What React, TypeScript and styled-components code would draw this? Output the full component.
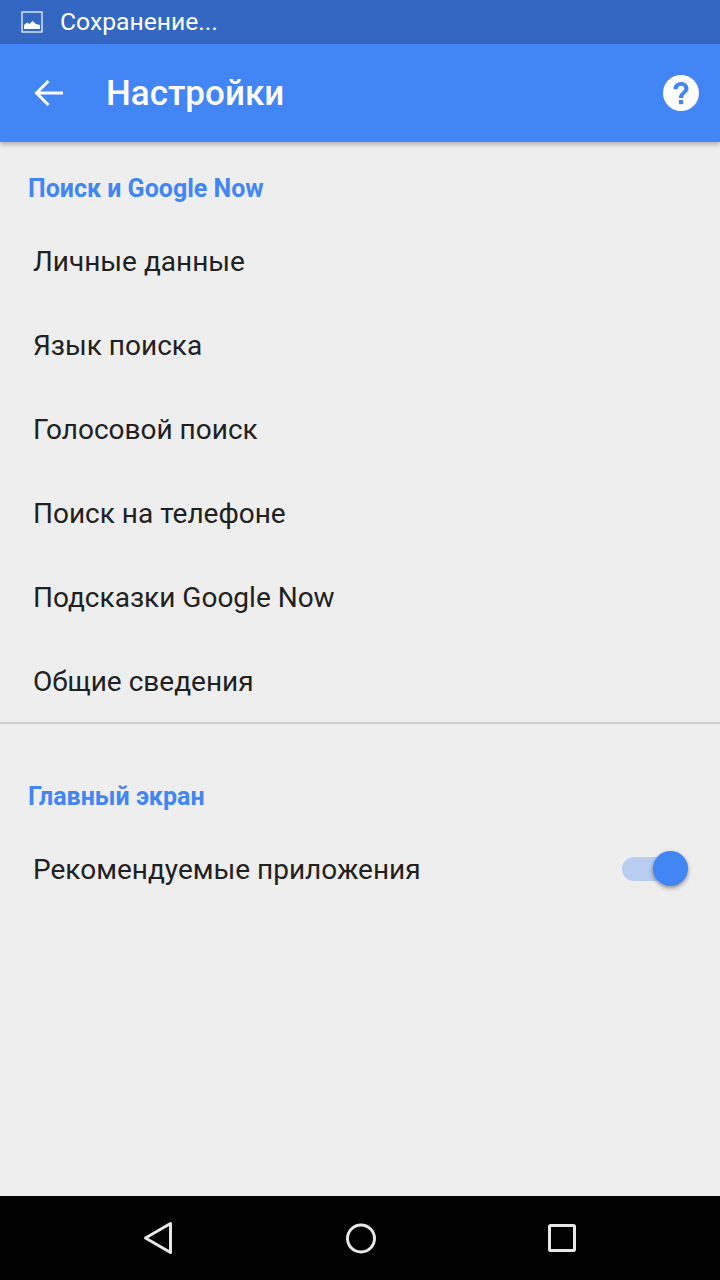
import React from "react";
import styled, { createGlobalStyle } from "styled-components";

const Global = createGlobalStyle`
  html, body { margin: 0; padding: 0; }
  body { font-family: Roboto, "Noto Sans", sans-serif; background: #eeeeee; }
`;

const Screen = styled.div`
  width: 720px;
  height: 1280px;
  display: flex;
  flex-direction: column;
  background: #eeeeee;
  overflow: hidden;
`;

const StatusBar = styled.div`
  height: 44px;
  flex: none;
  background: #3367c2;
  display: flex;
  align-items: center;
  padding-left: 21px;
  gap: 17px;
  color: #fff;
  font-size: 24.7px;
`;

const StatusText = styled.span`
  margin-bottom: 2px;
`;

const AppBar = styled.header`
  height: 98px;
  flex: none;
  background: #4285f4;
  display: flex;
  align-items: center;
  color: #fff;
  padding: 0 21px 0 34px;
  box-shadow: 0 2px 5px rgba(0, 0, 0, 0.3);
  position: relative;
`;

const Title = styled.h1`
  margin: 0 0 0 42px;
  font-size: 35px;
  font-weight: 500;
  flex: 1;
`;

const Content = styled.main`
  flex: 1;
  display: flex;
  flex-direction: column;
`;

const SectionHeader = styled.div<{ $height: number }>`
  height: ${(p) => p.$height}px;
  display: flex;
  align-items: flex-end;
  padding: 0 0 16px 28px;
  box-sizing: border-box;
  color: #4285f4;
  font-size: 25px;
  font-weight: 700;
  line-height: 28px;
`;

const Row = styled.div`
  height: 84px;
  display: flex;
  align-items: center;
  justify-content: space-between;
  padding: 0 32px 0 33px;
  color: #212121;
  font-size: 28px;
`;

const Divider = styled.hr`
  margin: -1px 0 0;
  border: 0;
  height: 2px;
  background: #d0d0d0;
`;

const Switch = styled.div`
  width: 66px;
  height: 36px;
  position: relative;
  display: flex;
  align-items: center;
`;

const Track = styled.div`
  width: 60px;
  height: 24px;
  border-radius: 12px;
  background: #b8cdef;
`;

const Thumb = styled.div`
  position: absolute;
  right: 0;
  top: 0;
  width: 35px;
  height: 35px;
  border-radius: 50%;
  background: #4285f4;
  box-shadow: 0 2px 4px rgba(0, 0, 0, 0.4);
`;

const NavBar = styled.nav`
  height: 84px;
  flex: none;
  background: #000;
  display: flex;
  align-items: center;
  justify-content: center;
  gap: 158px;
  padding-left: 2px;
`;

const NavIcon = styled.svg`
  width: 44px;
  height: 44px;
  display: block;
`;

const items = ["Личные данные", "Язык поиска", "Голосовой поиск", "Поиск на телефоне", "Подсказки Google Now", "Общие сведения"];

export default function App() {
  return (
    <Screen>
      <Global />
      <StatusBar>
        <svg width="22" height="22" viewBox="0 0 22 22">
          <rect x="1" y="1" width="20" height="20" fill="none" stroke="#fff" strokeWidth="1.4" opacity="0.85" />
          <path d="M3 18v-4l3-2.500 2.500 1.500 3-3 3.500 3 4 1V18z" fill="#fff" />
        </svg>
        <StatusText>Сохранение...</StatusText>
      </StatusBar>
      <AppBar>
        <svg width="30" height="30" viewBox="0 0 30 30" fill="none" stroke="#fff" strokeWidth="3">
          <path d="M29 15H3M14.500 3 2.500 15l12 12" />
        </svg>
        <Title>Настройки</Title>
        <svg width="36" height="36" viewBox="0 0 36 36">
          <circle cx="18" cy="18" r="18" fill="#fff" />
          <path d="M10.500 14c0-4 3.300-7 7.500-7s7.500 2.700 7.500 6.500c0 4.700-5.300 5-5.300 9.500h-4.200c0-6 5.300-6 5.300-9.500 0-1.500-1.500-2.800-3.300-2.800s-3.400 1.500-3.400 3.800z" fill="#4285f4" />
          <rect x="16" y="25" width="4.200" height="4.200" fill="#4285f4" />
        </svg>
      </AppBar>
      <Content>
        <SectionHeader $height={77}>Поиск и Google Now</SectionHeader>
        {items.map((t) => (
          <Row key={t}>{t}</Row>
        ))}
        <Divider />
        <SectionHeader $height={103}>Главный экран</SectionHeader>
        <Row>
          Рекомендуемые приложения
          <Switch>
            <Track />
            <Thumb />
          </Switch>
        </Row>
      </Content>
      <NavBar>
        <NavIcon viewBox="0 0 44 44" fill="none" stroke="#e8e8e8" strokeWidth="3" strokeLinejoin="round">
          <path d="M33.500 7.500v29L8.500 22z" />
        </NavIcon>
        <NavIcon viewBox="0 0 44 44" fill="none" stroke="#e8e8e8" strokeWidth="3">
          <circle cx="22" cy="22.500" r="13.500" />
        </NavIcon>
        <NavIcon viewBox="0 0 44 44" fill="none" stroke="#e8e8e8" strokeWidth="3" strokeLinejoin="round">
          <rect x="8.500" y="9.500" width="25" height="25" rx="1" />
        </NavIcon>
      </NavBar>
    </Screen>
  );
}
